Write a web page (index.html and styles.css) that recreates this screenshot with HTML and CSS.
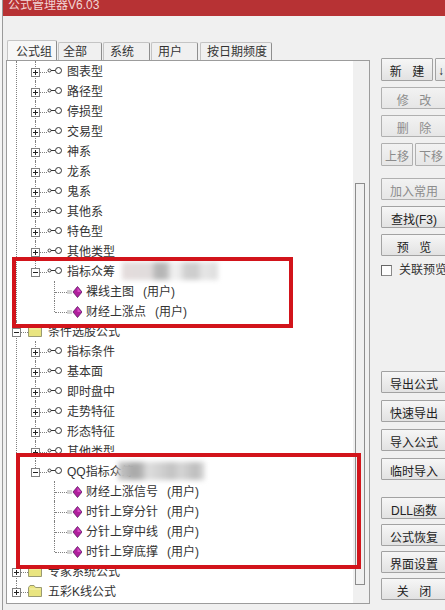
FILE: index.html
```html
<!DOCTYPE html>
<html lang="zh-CN">
<head>
  <meta charset="UTF-8">
  <title>公式管理器</title>
  <link rel="stylesheet" href="styles.css">
</head>
<body>

  <svg class="defs" width="0" height="0">
    <symbol id="plus" viewBox="0 0 9 9">
      <rect x="0.5" y="0.5" width="8" height="8" fill="#fff" stroke="#808080"/>
      <path d="M2 4.5h5M4.5 2v5" stroke="#222" fill="none"/>
    </symbol>
    <symbol id="minus" viewBox="0 0 9 9">
      <rect x="0.5" y="0.5" width="8" height="8" fill="#fff" stroke="#808080"/>
      <path d="M2 4.5h5" stroke="#222" fill="none"/>
    </symbol>
    <symbol id="key" viewBox="0 0 15 9">
      <circle cx="2.5" cy="4.5" r="1.5" fill="#fff" stroke="#444"/>
      <path d="M4 4.5h4.5" stroke="#333" fill="none"/>
      <circle cx="11.5" cy="4.5" r="3" fill="#fff" stroke="#333"/>
    </symbol>
    <symbol id="folder" viewBox="0 0 14 12">
      <path d="M0.5 11.5V2.5L2 0.5H6L7.5 2.5H13.5V11.5Z" fill="#e9e47f" stroke="#9a9a72"/>
      <path d="M1.5 4H12.5" stroke="#f6f3b8" fill="none"/>
    </symbol>
    <symbol id="formula" viewBox="0 0 15 12">
      <path d="M0 5h5M0 7h5" stroke="#a8a8a8" fill="none"/>
      <path d="M10.5 0.5L15 6L10.5 11.5L6 6Z" fill="#b0209c" stroke="#5e1a66" stroke-width="0.8"/>
      <path d="M10.5 1.5L14 6H10.5Z" fill="#d64cc4"/>
    </symbol>
  </svg>

  <div class="window">
    <div class="titlebar">公式管理器V6.03</div>

    <div class="main">
      <div class="left">
        <div class="tabs">
          <div class="tab tab-active">公式组</div>
          <div class="tab tab-short">全部</div>
          <div class="tab">系统</div>
          <div class="tab">用户</div>
          <div class="tab tab-wide">按日期频度</div>
        </div>

        <div class="panel">
          <div class="tree">
            <ul class="root">
              <li>
                <ul>
                  <li><div class="row"><svg class="exp"><use href="#plus"/></svg><i class="dots"></i><svg class="key"><use href="#key"/></svg><span class="label">图表型</span></div></li>
                  <li><div class="row"><svg class="exp"><use href="#plus"/></svg><i class="dots"></i><svg class="key"><use href="#key"/></svg><span class="label">路径型</span></div></li>
                  <li><div class="row"><svg class="exp"><use href="#plus"/></svg><i class="dots"></i><svg class="key"><use href="#key"/></svg><span class="label">停损型</span></div></li>
                  <li><div class="row"><svg class="exp"><use href="#plus"/></svg><i class="dots"></i><svg class="key"><use href="#key"/></svg><span class="label">交易型</span></div></li>
                  <li><div class="row"><svg class="exp"><use href="#plus"/></svg><i class="dots"></i><svg class="key"><use href="#key"/></svg><span class="label">神系</span></div></li>
                  <li><div class="row"><svg class="exp"><use href="#plus"/></svg><i class="dots"></i><svg class="key"><use href="#key"/></svg><span class="label">龙系</span></div></li>
                  <li><div class="row"><svg class="exp"><use href="#plus"/></svg><i class="dots"></i><svg class="key"><use href="#key"/></svg><span class="label">鬼系</span></div></li>
                  <li><div class="row"><svg class="exp"><use href="#plus"/></svg><i class="dots"></i><svg class="key"><use href="#key"/></svg><span class="label">其他系</span></div></li>
                  <li><div class="row"><svg class="exp"><use href="#plus"/></svg><i class="dots"></i><svg class="key"><use href="#key"/></svg><span class="label">特色型</span></div></li>
                  <li><div class="row"><svg class="exp"><use href="#plus"/></svg><i class="dots"></i><svg class="key"><use href="#key"/></svg><span class="label">其他类型</span></div></li>
                  <li>
                    <div class="row"><svg class="exp"><use href="#minus"/></svg><i class="dots"></i><svg class="key"><use href="#key"/></svg><span class="label">指标众筹</span><span class="smudge smudge-a"></span></div>
                    <ul>
                      <li><div class="row row-leaf"><i class="dots"></i><svg class="formula"><use href="#formula"/></svg><span class="label">裸线主图<em class="owner">(用户)</em></span></div></li>
                      <li><div class="row row-leaf"><i class="dots"></i><svg class="formula"><use href="#formula"/></svg><span class="label">财经上涨点<em class="owner">(用户)</em></span></div></li>
                    </ul>
                  </li>
                </ul>
              </li>
              <li>
                <div class="row row-top"><svg class="exp"><use href="#minus"/></svg><i class="dots"></i><svg class="folder"><use href="#folder"/></svg><span class="label">条件选股公式</span></div>
                <ul>
                  <li><div class="row"><svg class="exp"><use href="#plus"/></svg><i class="dots"></i><svg class="key"><use href="#key"/></svg><span class="label">指标条件</span></div></li>
                  <li><div class="row"><svg class="exp"><use href="#plus"/></svg><i class="dots"></i><svg class="key"><use href="#key"/></svg><span class="label">基本面</span></div></li>
                  <li><div class="row"><svg class="exp"><use href="#plus"/></svg><i class="dots"></i><svg class="key"><use href="#key"/></svg><span class="label">即时盘中</span></div></li>
                  <li><div class="row"><svg class="exp"><use href="#plus"/></svg><i class="dots"></i><svg class="key"><use href="#key"/></svg><span class="label">走势特征</span></div></li>
                  <li><div class="row"><svg class="exp"><use href="#plus"/></svg><i class="dots"></i><svg class="key"><use href="#key"/></svg><span class="label">形态特征</span></div></li>
                  <li><div class="row"><svg class="exp"><use href="#plus"/></svg><i class="dots"></i><svg class="key"><use href="#key"/></svg><span class="label">其他类型</span></div></li>
                  <li>
                    <div class="row"><svg class="exp"><use href="#minus"/></svg><i class="dots"></i><svg class="key"><use href="#key"/></svg><span class="label">QQ指标众筹</span><span class="smudge smudge-b"></span></div>
                    <ul>
                      <li><div class="row row-leaf"><i class="dots"></i><svg class="formula"><use href="#formula"/></svg><span class="label">财经上涨信号<em class="owner">(用户)</em></span></div></li>
                      <li><div class="row row-leaf"><i class="dots"></i><svg class="formula"><use href="#formula"/></svg><span class="label">时针上穿分针<em class="owner">(用户)</em></span></div></li>
                      <li><div class="row row-leaf"><i class="dots"></i><svg class="formula"><use href="#formula"/></svg><span class="label">分针上穿中线<em class="owner">(用户)</em></span></div></li>
                      <li><div class="row row-leaf"><i class="dots"></i><svg class="formula"><use href="#formula"/></svg><span class="label">时针上穿底撑<em class="owner">(用户)</em></span></div></li>
                    </ul>
                  </li>
                </ul>
              </li>
              <li><div class="row row-top"><svg class="exp"><use href="#plus"/></svg><i class="dots"></i><svg class="folder"><use href="#folder"/></svg><span class="label">专家系统公式</span></div></li>
              <li><div class="row row-top"><svg class="exp"><use href="#plus"/></svg><i class="dots"></i><svg class="folder"><use href="#folder"/></svg><span class="label">五彩K线公式</span></div></li>
            </ul>
          </div>
          <div class="scroll"><div class="thumb"></div></div>
        </div>
      </div>

      <div class="side">
        <div class="btn-group">
          <div class="btn-row">
            <button class="btn btn-new">新 建</button>
            <button class="btn btn-arrow">↓</button>
          </div>
          <button class="btn" disabled>修 改</button>
          <button class="btn" disabled>删 除</button>
          <div class="btn-row">
            <button class="btn btn-half" disabled>上移</button>
            <button class="btn btn-half" disabled>下移</button>
          </div>
        </div>

        <div class="btn-group group-search">
          <button class="btn" disabled>加入常用</button>
          <button class="btn">查找(F3)</button>
          <button class="btn">预 览</button>
          <div class="check-row"><span class="check"></span>关联预览</div>
        </div>

        <div class="btn-group group-io">
          <button class="btn">导出公式</button>
          <button class="btn">快速导出</button>
          <button class="btn">导入公式</button>
          <button class="btn">临时导入</button>
        </div>

        <div class="btn-group group-tools">
          <button class="btn">DLL函数</button>
          <button class="btn">公式恢复</button>
          <button class="btn">界面设置</button>
          <button class="btn">关 闭</button>
        </div>
      </div>
    </div>
  </div>

  <!-- red marks drawn over the screenshot -->
  <div class="mark mark-a"></div>
  <div class="mark mark-b"></div>

</body>
</html>
```

FILE: styles.css
```css
* {
  box-sizing: border-box;
}

html, body {
  margin: 0;
  width: 445px;
  height: 610px;
  overflow: hidden;
}

body {
  position: relative;
  background: #f4f4f4;
  font-family: "Liberation Sans", "Noto Sans CJK SC", sans-serif;
  font-size: 12px;
  color: #333;
}

.defs {
  position: absolute;
}

.window {
  margin-left: 2px;
  height: 610px;
  border-left: 1px solid #9a9a9a;
  background: #f0f0f0;
}

.titlebar {
  height: 16px;
  padding-left: 5px;
  background: #b73234;
  color: #f2d6d6;
  font-size: 12px;
  line-height: 11px;
  overflow: hidden;
}

.main {
  display: flex;
}

.left {
  flex: none;
  width: 367px;
  padding: 24px 0 0 3px;
}

/* tabs */
.tabs {
  display: flex;
  align-items: flex-end;
  height: 20px;
  padding-left: 1px;
}

.tab {
  width: 47px;
  height: 18px;
  padding-left: 6px;
  margin-right: 1px;
  background: #f0f0f0;
  border: 1px solid #c4c4c4;
  border-right-color: #8e8e8e;
  border-bottom: 0;
  border-radius: 2px 2px 0 0;
  line-height: 19px;
}

.tab-active {
  width: 50px;
  height: 20px;
  padding-left: 8px;
  background: #f7f7f7;
  line-height: 22px;
}

.tab-short {
  width: 44px;
  padding-left: 4px;
}

.tab-wide {
  width: 72px;
  margin-left: 1px;
}

.panel {
  display: flex;
  height: 544px;
  border: 1px solid #9c9c9c;
}

/* tree */
.tree {
  flex: none;
  width: 346px;
  padding-left: 9px;
  background: #fff;
  overflow: hidden;
}

.tree ul {
  list-style: none;
  margin: 0 0 0 18px;
  padding: 0;
}

.tree .root {
  margin-left: 0;
}

.tree li {
  position: relative;
  padding-left: 1px;
}

.tree li::before {
  content: "";
  position: absolute;
  left: 0;
  top: 0;
  bottom: 0;
  border-left: 1px dotted #808080;
}

.tree li:last-child::before {
  bottom: auto;
  height: 11px;
}

.row {
  position: relative;
  display: flex;
  align-items: center;
  height: 20px;
  margin-left: -5px;
  white-space: nowrap;
}

.row-leaf {
  margin-left: 0;
}

.exp {
  flex: none;
  width: 9px;
  height: 9px;
  margin-top: 2px;
}

.dots {
  flex: none;
  width: 7px;
  margin-top: 2px;
  border-top: 1px dotted #808080;
}

.row-leaf .dots {
  width: 12px;
}

.key {
  flex: none;
  width: 15px;
  height: 9px;
  margin: 0 5px 1px 0;
}

.folder {
  flex: none;
  width: 14px;
  height: 12px;
  margin-right: 6px;
}

.formula {
  flex: none;
  width: 15px;
  height: 12px;
  margin: 2px 4px 0 0;
}

.label {
  padding-top: 2px;
  line-height: 20px;
}

.owner {
  margin-left: 9px;
  font-style: normal;
}

/* the blurred-out part of two names */
.smudge {
  flex: none;
  height: 18px;
  filter: blur(2.5px);
}

.smudge-a {
  width: 96px;
  margin-left: 7px;
  background: linear-gradient(90deg, #e4dcdc 0, #e0dcdc 30%, #b4b4b4 36%, #b8b8b8 46%, #f2f2f2 52%, #ececec 60%, #cfcfcf 66%, #cdcdcd 78%, #e6e6e6 84%, #dedede 100%);
}

.smudge-b {
  width: 87px;
  margin-left: -16px;
  background: linear-gradient(90deg, #c8c8c8 0, #a8a8a8 18%, #b0b0b0 26%, #dedede 34%, #d0d0d0 50%, #c2c2c2 62%, #d6d6d6 72%, #bcbcbc 90%, #e0e0e0 100%);
}

.scroll {
  flex: 1;
  padding: 122px 0 0 2px;
}

.thumb {
  width: 10px;
  height: 402px;
  background: #f0f0f0;
  border: 1px solid #8c8c8c;
}

/* buttons */
.side {
  flex: none;
  width: 66px;
  margin-left: 11px;
  padding-top: 42px;
}

.btn-group {
  display: flex;
  flex-direction: column;
  gap: 6px;
}

.group-search {
  margin-top: 12px;
}

.group-io {
  margin-top: 94px;
  gap: 7px;
}

.group-tools {
  margin-top: 17px;
  gap: 5px;
}

.btn-row {
  display: flex;
  gap: 2px;
}

.btn {
  width: 66px;
  height: 22px;
  padding: 2px 0 0;
  background: linear-gradient(#f6f6f6, #e2e2e2);
  border: 1px solid #a2a2a2;
  border-radius: 1px;
  font: inherit;
  color: #222;
  word-spacing: 7px;
  white-space: nowrap;
}

.btn:disabled {
  background: linear-gradient(#f2f2f2, #e6e6e6);
  border-color: #b0b0b0;
  color: #8c8c8c;
}

.btn-new {
  width: 54px;
  height: 23px;
}

.btn-arrow {
  flex: none;
  width: 12px;
  height: 23px;
  overflow: hidden;
}

.btn-half {
  flex: none;
  width: 32px;
  height: 23px;
}

.check-row {
  display: flex;
  align-items: center;
  margin-top: 1px;
  width: 70px;
  height: 14px;
  line-height: 14px;
  white-space: nowrap;
}

.check {
  flex: none;
  width: 11px;
  height: 11px;
  margin-right: 7px;
  background: #fdfdfd;
  border: 1px solid #8a8a8a;
  border-top-color: #666;
  border-left-color: #666;
}

/* annotation boxes */
.mark {
  position: absolute;
  border: 4px solid #d2141b;
}

.mark-a {
  left: 12px;
  top: 257px;
  width: 281px;
  height: 71px;
}

.mark-b {
  left: 16px;
  top: 453px;
  width: 345px;
  height: 116px;
}
```
